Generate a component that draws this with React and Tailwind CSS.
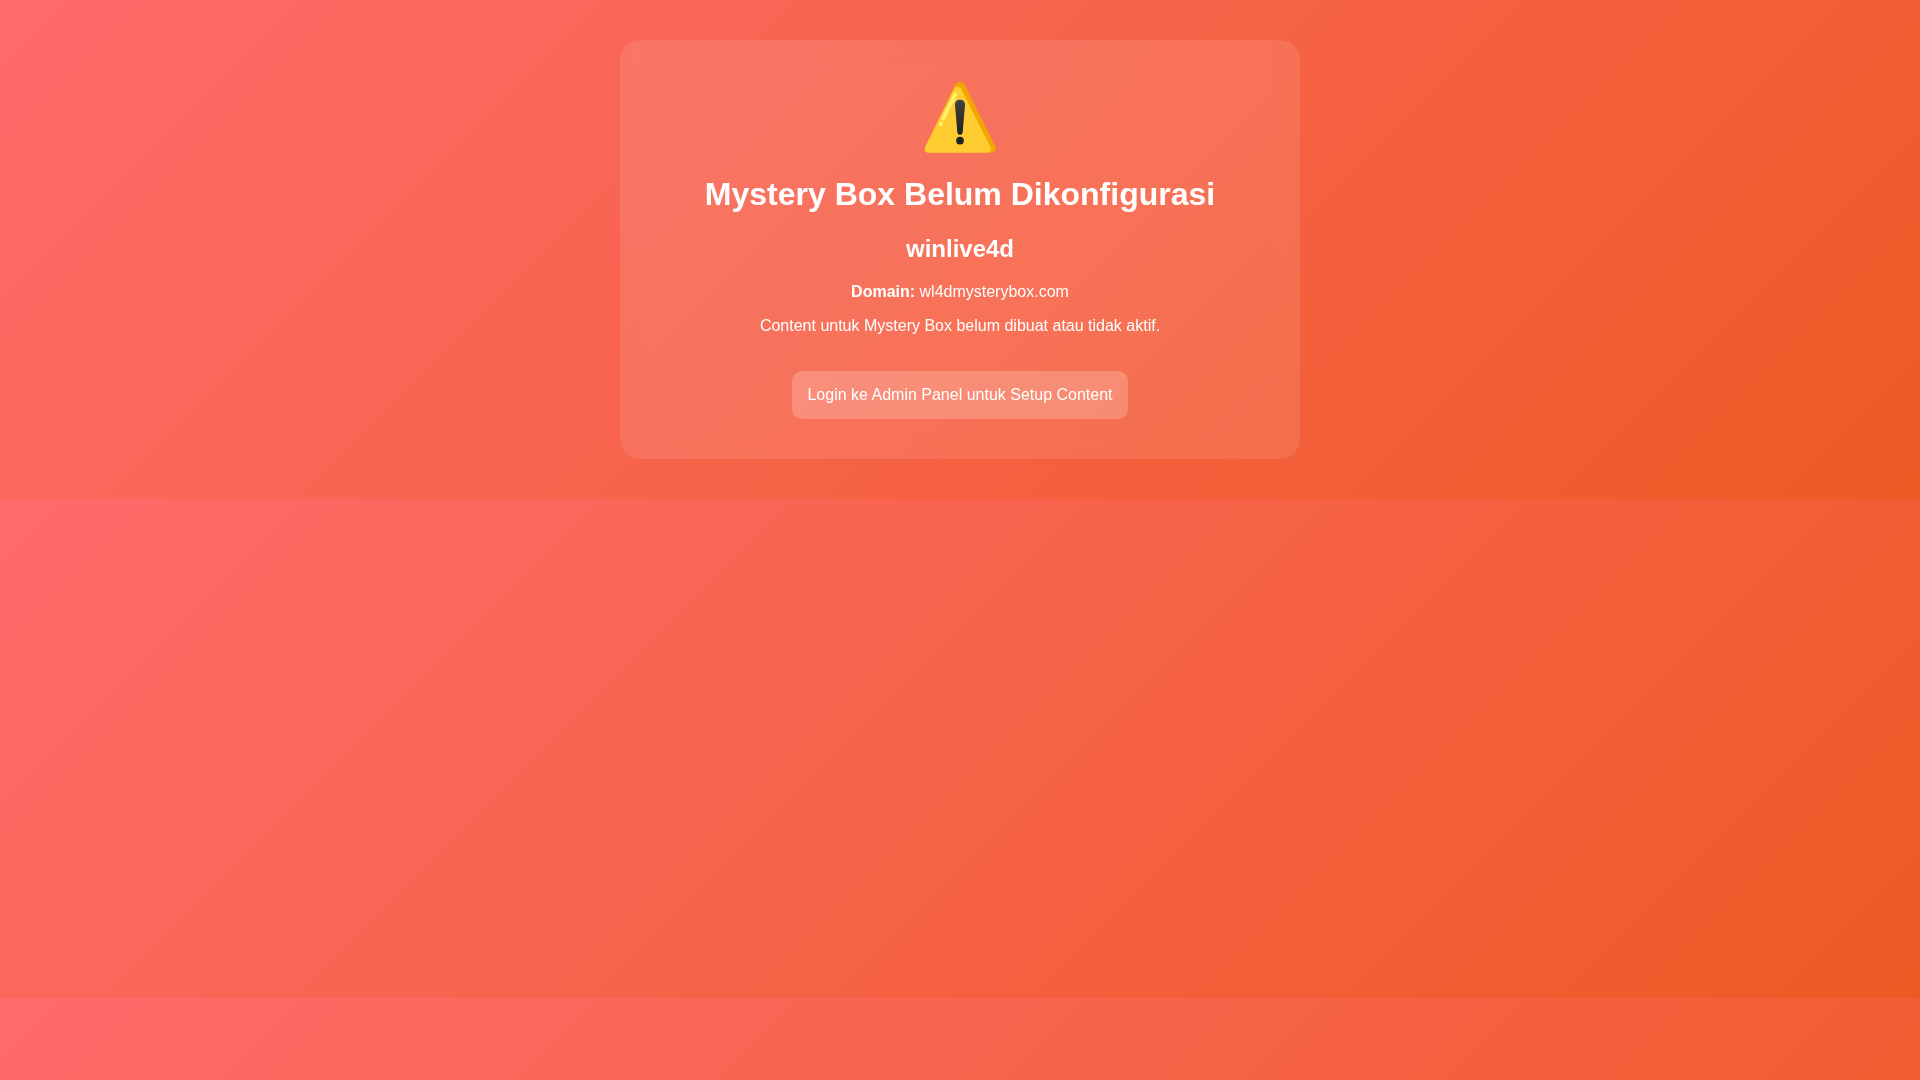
function WarningIcon() {
  return (
    <svg className="mb-5 h-[75px] w-[72px]" viewBox="72 60 216 225" role="img" aria-label="⚠️">
      <defs>
        <linearGradient id="mark" x1="0" y1="0" x2="0" y2="1">
          <stop offset="0" stopColor="#424242" />
          <stop offset="1" stopColor="#212121" />
        </linearGradient>
      </defs>
      <path
        d="M166 73 Q172 65 180 65 Q189 65 194 74 L285 257 Q291 270 283 275 Q280 278 273 278 H87 Q76 278 74 270 Q74 264 77 258 Z"
        fill="#f2a600"
      />
      <path
        d="M164 83 Q168 80 174 80 Q180 81 184 88 L270 258 Q276 270 270 275 Q267 278 262 278 H87 Q76 278 74 270 Q74 264 77 258 Z"
        fill="#ffcc32"
      />
      <path d="M166 103 L129 176" stroke="#fff170" strokeWidth="11" strokeLinecap="round" />
      <circle cx="122.500" cy="192" r="6.500" fill="#fff170" />
      <path
        d="M180 119 Q196 119 195 136 L188 217 Q187 225 180 225 Q173 225 172 217 L165 136 Q164 119 180 119 Z"
        fill="url(#mark)"
      />
      <circle cx="180" cy="242" r="11.500" fill="#212121" />
    </svg>
  );
}

export default function App() {
  return (
    <div className="min-h-screen bg-linear-[135deg,#ff6b6b,#ee5a24] bg-[length:100%_499px] px-5 py-10 text-center font-['Liberation_Sans',Arial,sans-serif] text-base text-white">
      <main className="mx-auto flex max-w-[680px] flex-col items-center rounded-[20px] bg-white/10 p-10 backdrop-blur-[10px]">
        <WarningIcon />
        <h1 className="mb-[22px] text-[32px] leading-[38px] font-bold">Mystery Box Belum Dikonfigurasi</h1>
        <h2 className="mb-5 text-2xl leading-7 font-bold">winlive4d</h2>
        <p className="mb-4 leading-[18px]"><strong>Domain:</strong> wl4dmysterybox.com</p>
        <p className="leading-[18px]">Content untuk Mystery Box belum dibuat atau tidak aktif.</p>
        <a href="#admin" className="mt-9 rounded-[10px] bg-white/20 p-[15px] leading-[18px]">Login ke Admin Panel untuk Setup Content</a>
      </main>
    </div>
  );
}
